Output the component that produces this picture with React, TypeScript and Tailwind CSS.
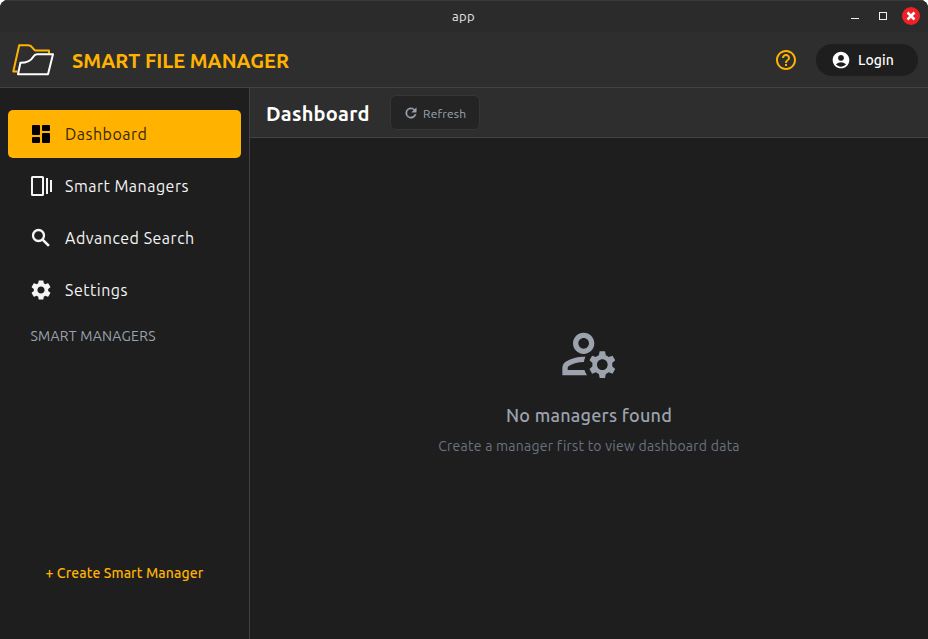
import type { ReactNode } from "react";
import {
  MdAccountCircle,
  MdHelpOutline,
  MdOutlineManageAccounts,
  MdSettings,
} from "react-icons/md";

function FolderLogo() {
  return (
    <svg width="44" height="34" viewBox="0 0 44 34" fill="none" strokeWidth="2" strokeLinejoin="round">
      <path d="M6.5 28.5H2.3L8.2 2.3H17.5C21.5 2.3 22 7 24.5 7.6H38V10.5" stroke="#ffb300" />
      <path d="M7 31.3L9.4 19.8C15 19.8 19.5 18.6 22.3 13.7C23 12.5 24 11.2 26 11.2H42L37 31.3Z" stroke="#fff" />
    </svg>
  );
}

function DashboardIcon() {
  return (
    <svg width="24" height="24" viewBox="0 0 24 24" fill="currentColor">
      <rect x="3" y="3" width="8" height="10" rx="1" />
      <rect x="3" y="15" width="8" height="6" rx="1" />
      <rect x="13" y="3" width="8" height="6" rx="1" />
      <rect x="13" y="11" width="8" height="10" rx="1" />
    </svg>
  );
}

function StoriesIcon() {
  return (
    <svg width="24" height="24" viewBox="0 0 24 24" fill="none" stroke="currentColor">
      <rect x="3" y="3" width="11" height="18" rx="0.5" strokeWidth="2" />
      <path d="M18 4V20" strokeWidth="2" />
      <path d="M22 6V18" strokeWidth="2" />
    </svg>
  );
}

function SearchIcon() {
  return (
    <svg width="24" height="24" viewBox="0 0 24 24" fill="none" stroke="currentColor">
      <circle cx="9.5" cy="9.5" r="5.5" strokeWidth="2.3" />
      <path d="M13.6 13.6L19.9 19.9" strokeWidth="2.6" />
    </svg>
  );
}

function RefreshIcon() {
  return (
    <svg width="16" height="16" viewBox="0 0 24 24" fill="currentColor" stroke="currentColor" strokeWidth="0.5">
      <path d="M17.65 6.35A7.958 7.958 0 0 0 12 4a8 8 0 1 0 7.73 10h-2.08A5.99 5.99 0 0 1 12 18a6 6 0 1 1 0-12c1.66 0 3.14.69 4.22 1.78L13 11h7V4z" />
    </svg>
  );
}

function NavItem({ icon, active, children }: { icon: ReactNode; active?: boolean; children: ReactNode }) {
  return (
    <div
      className={
        active
          ? "flex h-12 items-center gap-3 rounded-[5px] bg-[#ffb300] pl-[21px] text-base tracking-[0.5px] text-[#35290c]"
          : "flex h-12 items-center gap-3 rounded-[5px] pl-[21px] text-base tracking-[0.5px] text-[#f5f5f5]"
      }
    >
      {icon}
      {children}
    </div>
  );
}

export default function App() {
  return (
    <div className="h-[639px] w-[928px] bg-white font-['Ubuntu','Noto_Sans',sans-serif]">
      <div className="flex h-full flex-col overflow-hidden rounded-t-lg bg-[#1e1e1e]">
        <div className="grid h-8 shrink-0 grid-cols-[1fr_auto_1fr] items-center border-t border-[#3a3a3a] bg-[#2b2b2b]">
          <span />
          <span className="-mt-0.5 pr-px text-[13px] leading-[30px] tracking-[0.3px] text-[#e6e6e6]">app</span>
          <div className="-mt-0.5 flex items-center justify-end pr-2">
            <svg width="38" height="18" viewBox="0 0 38 18" fill="none" stroke="#f0f0f0" className="mr-[15px]">
              <path d="M2 11.5H10" />
              <rect x="30.5" y="5.5" width="7" height="7" />
            </svg>
            <svg width="18" height="18" viewBox="0 0 18 18">
              <circle cx="9" cy="9" r="9" fill="#ed2127" />
              <path d="M5.5 5.5L12.5 12.5M12.5 5.5L5.5 12.5" stroke="#fff" strokeWidth="2.5" />
            </svg>
          </div>
        </div>

        <header className="flex h-14 shrink-0 items-center border-b border-[#424242] bg-[#2e2e2e] pr-[10px] pl-[11px]">
          <FolderLogo />
          <h1 className="ml-[17px] pt-0.5 text-[20px] font-bold text-[#ffb300]">SMART FILE MANAGER</h1>
          <MdHelpOutline size={24} className="ml-auto text-[#ffb300]" />
          <button className="ml-[18px] flex h-8 w-[102px] items-center gap-[7px] rounded-full bg-[#1e1e1e] pl-[15px] text-sm font-medium tracking-[0.1px] text-white">
            <MdAccountCircle size={20} />
            <span>Login</span>
          </button>
        </header>

        <div className="flex min-h-0 flex-1">
          <aside className="flex w-[250px] shrink-0 flex-col border-r border-[#424242]">
            <nav className="flex flex-col gap-1 px-2 pt-[22px]">
              <NavItem active icon={<span className="text-black"><DashboardIcon /></span>}>
                Dashboard
              </NavItem>
              <NavItem icon={<StoriesIcon />}>Smart Managers</NavItem>
              <NavItem icon={<SearchIcon />}>Advanced Search</NavItem>
              <NavItem icon={<MdSettings size={24} />}>Settings</NavItem>
            </nav>
            <h2 className="mt-3 pl-[30.5px] text-sm leading-5 tracking-[0.25px] text-[#9ca3af]">SMART MANAGERS</h2>
            <button className="mt-auto mb-14 h-5 pl-[45.5px] text-left text-sm leading-5 font-medium tracking-[0.1px] text-[#ffb300]">
              + Create Smart Manager
            </button>
          </aside>

          <main className="flex min-w-0 flex-1 flex-col">
            <div className="flex h-[50px] shrink-0 items-center border-b border-[#424242] bg-[#2e2e2e] pl-4">
              <h2 className="w-[124px] pt-0.5 text-[20px] font-bold tracking-[0.25px] text-white">Dashboard</h2>
              <button className="flex h-[35px] w-[90px] items-center gap-1 rounded-[6px] border border-[#363636] bg-[#242424] pl-3 text-xs tracking-[0.2px] text-[#9ca3af]">
                <RefreshIcon />
                <span className="pt-0.5">Refresh</span>
              </button>
            </div>
            <div className="flex flex-1 flex-col items-center pt-[184px]">
              <MdOutlineManageAccounts size={64} className="text-[#9ca3af]" />
              <p className="mt-[15px] text-lg leading-7 font-medium tracking-[0.25px] text-[#9ca3af]">No managers found</p>
              <p className="mt-[7px] text-sm leading-5 tracking-[0.25px] text-[#6b7280]">Create a manager first to view dashboard data</p>
            </div>
          </main>
        </div>
      </div>
    </div>
  );
}
